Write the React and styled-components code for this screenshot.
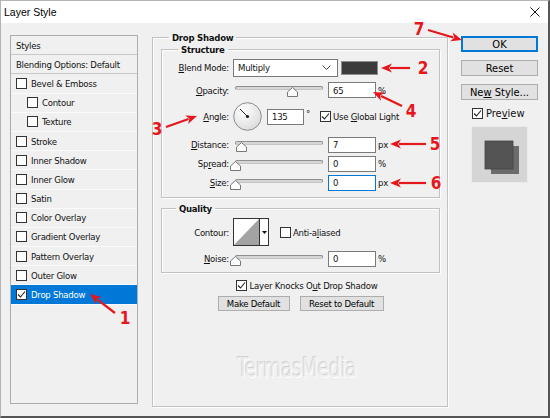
import React from "react";
import styled, { createGlobalStyle } from "styled-components";

const GlobalStyle = createGlobalStyle`
  html, body {
    margin: 0;
    padding: 0;
    background: #f0f0f0;
  }
  * {
    box-sizing: border-box;
  }
`;

const UI_FONT = `"DejaVu Sans Condensed", "DejaVu Sans", sans-serif`;
const RED = "#e5171d";

const Window = styled.div`
  position: relative;
  width: 550px;
  height: 418px;
  background: #f0f0f0;
  border: 1px solid #b4b4b4;
  border-right: 2px solid #555;
  border-bottom: 2px solid #555;
  font-family: ${UI_FONT};
  font-stretch: condensed;
  font-size: 9.5px;
  letter-spacing: -0.25px;
  color: #111;
  display: flex;
  flex-direction: column;
  overflow: hidden;
`;

const TitleBar = styled.div`
  height: 22px;
  flex: none;
  background: #fff;
  display: flex;
  align-items: center;
  justify-content: space-between;
  padding: 0 8px 0 3px;
`;

const Title = styled.span`
  font-family: "Liberation Sans", Arial, sans-serif;
  font-stretch: normal;
  font-size: 10.5px;
  letter-spacing: 0;
  color: #000;
`;

const Body = styled.div`
  display: flex;
  align-items: flex-start;
  padding: 8px 0 0 9px;
`;

/* ---------- left list of styles ---------- */

const StylePanel = styled.div`
  width: 128px;
  height: 369px;
  margin-top: 4px;
  border: 1px solid #adadad;
  background: #f0f0f0;
`;

const StyleRow = styled.div`
  height: 19.2px;
  display: flex;
  align-items: center;
  gap: 4px;
  padding-left: ${({ $indent }) => ($indent ? 16 : 5)}px;
  background: ${({ $selected }) => ($selected ? "#0078d7" : "transparent")};
  color: ${({ $selected }) => ($selected ? "#fff" : "#111")};
  border-bottom: 1px solid ${({ $header }) => ($header ? "#c8c8c8" : "#fbfbfb")};
  white-space: nowrap;
`;

const Box = styled.span`
  flex: none;
  width: 11px;
  height: 11px;
  border: 1px solid #333;
  background: #fff;
  display: inline-flex;
  align-items: center;
  justify-content: center;
`;

const Checkbox = ({ checked }) => (
  <Box>
    {checked && (
      <svg width="9" height="9" viewBox="0 0 9 9">
        <path d="M1 4.5 L3.5 7 L8 1.5" fill="none" stroke="#222" strokeWidth="1.1" />
      </svg>
    )}
  </Box>
);

/* ---------- group boxes ---------- */

const Group = styled.fieldset`
  margin: ${({ $m }) => $m || 0};
  padding: 0;
  min-width: 0;
  width: ${({ $w }) => $w}px;
  height: ${({ $h }) => $h}px;
  border: 1px solid #c2c2c2;
  box-shadow: inset 1px 1px 0 #fdfdfd, 1px 1px 0 #fdfdfd;
`;

const Legend = styled.legend`
  margin-left: ${({ $at }) => $at}px;
  padding: 0 3px;
  font-weight: bold;
  line-height: 13px;
  color: #111;
`;

const GroupBody = styled.div`
  display: flex;
  flex-direction: column;
  padding: ${({ $pad }) => $pad};
`;

const FieldRow = styled.div`
  display: flex;
  align-items: center;
  height: ${({ $h }) => $h}px;
  margin-top: ${({ $mt }) => $mt || 0}px;
`;

const Label = styled.span`
  width: 67px;
  margin-right: 4px;
  text-align: right;
  white-space: nowrap;
`;

const Select = styled.div`
  width: 105px;
  height: 18px;
  border: 1px solid #7a7a7a;
  background: #fff;
  display: flex;
  align-items: center;
  justify-content: space-between;
  padding: 0 6px 0 4px;
`;

const Swatch = styled.div`
  width: 37px;
  height: 14px;
  margin-left: 3px;
  background: #3b3b3b;
  border: 1px solid #8e8e8e;
`;

const SliderWrap = styled.div`
  position: relative;
  width: 95px;
  height: 16px;
  flex: none;
`;

const Track = styled.div`
  margin: 4px 0 0 2px;
  width: 88px;
  height: 4px;
  border-radius: 2px;
  background: #d6d6d6;
  border: 1px solid #8f8f8f;
  border-bottom-color: #c4c4c4;
`;

const Thumb = styled.svg`
  position: absolute;
  top: 5px;
`;

const Slider = ({ value }) => (
  <SliderWrap>
    <Track />
    <Thumb width="11" height="10" viewBox="0 0 11 10" style={{ left: 2 + value * 0.88 - 5 + "px" }}>
      <path d="M5.5 0.5 L10.5 5 L10.5 9.5 L0.5 9.5 L0.5 5 Z" fill="#fdfdfd" stroke="#777" />
    </Thumb>
  </SliderWrap>
);

const NumInput = styled.div`
  width: ${({ $w }) => $w || 48}px;
  height: ${({ $h }) => $h || 16}px;
  margin-left: ${({ $ml }) => $ml || 0}px;
  border: 1px solid ${({ $focus }) => ($focus ? "#0078d7" : "#7a7a7a")};
  background: #fff;
  display: flex;
  align-items: center;
  padding-left: 4px;
  flex: none;
`;

const Unit = styled.span`
  margin-left: 2px;
  align-self: ${({ $sup }) => ($sup ? "flex-start" : "center")};
  margin-top: ${({ $sup }) => ($sup ? "6px" : 0)};
`;

const Dial = styled.svg`
  flex: none;
`;

const Inline = styled.span`
  display: inline-flex;
  align-items: center;
  gap: 2px;
  margin-left: ${({ $ml }) => $ml || 0}px;
  white-space: nowrap;
`;

const ContourBox = styled.div`
  width: 36px;
  height: 28px;
  border: 1px solid #333;
  background: #fff;
  display: flex;
  flex: none;
`;

const ContourArrow = styled.div`
  width: 9px;
  border-left: 1px solid #333;
  display: flex;
  align-items: center;
  justify-content: center;
`;

const CenterRow = styled.div`
  display: flex;
  justify-content: center;
  align-items: center;
  gap: 3px;
  padding-left: 12px;
  margin-top: ${({ $mt }) => $mt}px;
  height: ${({ $h }) => $h}px;
`;

const ButtonRow = styled.div`
  display: flex;
  justify-content: center;
  gap: 10px;
  margin-top: 4px;
`;

const Button = styled.div`
  width: ${({ $w }) => $w}px;
  height: ${({ $h }) => $h || 15}px;
  border: 1px solid ${({ $primary }) => ($primary ? "#0078d7" : "#adadad")};
  box-shadow: ${({ $primary }) => ($primary ? "inset 0 0 0 1px #0078d7" : "none")};
  background: #e1e1e1;
  display: flex;
  align-items: center;
  justify-content: center;
  white-space: nowrap;
  font-size: ${({ $big }) => ($big ? "11px" : "9.5px")};
  letter-spacing: ${({ $big }) => ($big ? "0" : "-0.25px")};
  color: #000;
`;

/* ---------- right column ---------- */

const Side = styled.div`
  width: 77px;
  margin: 5px 0 0 13px;
  display: flex;
  flex-direction: column;
  gap: 8px;
`;

const PreviewCheck = styled.div`
  display: flex;
  align-items: center;
  gap: 3px;
  padding-left: 11px;
  margin-top: -1px;
  font-size: 11px;
  letter-spacing: 0;
`;

const PreviewBox = styled.div`
  width: 57px;
  height: 57px;
  margin: -2px 0 0 10px;
  background: #d5d5d5;
  border: 1px solid #ebebeb;
`;

/* ---------- overlays ---------- */

const Watermark = styled.div`
  position: absolute;
  left: 206px;
  top: 351px;
  width: 180px;
  text-align: center;
  font-family: "DejaVu Sans Condensed", "DejaVu Sans", sans-serif;
  font-stretch: condensed;
  font-size: 27px;
  letter-spacing: -0.5px;
  transform: scaleX(0.78);
  color: #ececec;
  text-shadow: -1px -1px 0 #d0d0d0, 1px 1px 0 #ffffff;
  pointer-events: none;
`;

const Marks = styled.svg`
  position: absolute;
  left: -1px;
  top: -1px;
  pointer-events: none;
`;

const Num = styled.text`
  font-family: "DejaVu Sans Condensed", "DejaVu Sans", sans-serif;
  font-stretch: condensed;
  font-weight: bold;
  font-size: 17px;
  fill: ${RED};
`;

const Arrow = ({ from, to }) => {
  const [x1, y1] = from;
  const [x2, y2] = to;
  const len = Math.hypot(x2 - x1, y2 - y1);
  const ux = (x2 - x1) / len;
  const uy = (y2 - y1) / len;
  const hl = 11;
  const hw = 4.5;
  const bx = x2 - ux * hl;
  const by = y2 - uy * hl;
  const pts = [
    [x2, y2],
    [bx - uy * hw, by + ux * hw],
    [bx + ux * 3, by + uy * 3],
    [bx + uy * hw, by - ux * hw],
  ]
    .map((p) => p.join(","))
    .join(" ");
  return (
    <g>
      <line x1={x1} y1={y1} x2={bx + ux * 2} y2={by + uy * 2} stroke={RED} strokeWidth="2.2" />
      <polygon points={pts} fill={RED} />
    </g>
  );
};

const styleItems = [
  { name: "Bevel & Emboss" },
  { name: "Contour", indent: true },
  { name: "Texture", indent: true },
  { name: "Stroke" },
  { name: "Inner Shadow" },
  { name: "Inner Glow" },
  { name: "Satin" },
  { name: "Color Overlay" },
  { name: "Gradient Overlay" },
  { name: "Pattern Overlay" },
  { name: "Outer Glow" },
  { name: "Drop Shadow", checked: true, selected: true },
];

const annotations = [
  { n: "1", at: [125, 324], from: [115, 313], to: [90, 294] },
  { n: "2", at: [423, 74], from: [410, 68], to: [381, 68] },
  { n: "3", at: [157, 135], from: [166, 127], to: [197, 116] },
  { n: "4", at: [411, 117], from: [402, 106], to: [373, 92] },
  { n: "5", at: [435, 150], from: [426, 144], to: [390, 144] },
  { n: "6", at: [436, 189], from: [426, 183], to: [390, 183] },
  { n: "7", at: [419, 35], from: [428, 30], to: [462, 40] },
];

const SliderField = ({ label, value, text, unit, focus, mt }) => (
  <FieldRow $h={19} $mt={mt}>
    <Label>{label}</Label>
    <Slider value={value} />
    <NumInput $focus={focus}>{text}</NumInput>
    <Unit>{unit}</Unit>
  </FieldRow>
);

export default function App() {
  return (
    <>
      <GlobalStyle />
      <Window>
        <TitleBar>
          <Title>Layer Style</Title>
          <svg width="10" height="10" viewBox="0 0 10 10">
            <path d="M0.5 0.5 L9.5 9.5 M9.5 0.5 L0.5 9.5" stroke="#111" strokeWidth="1" />
          </svg>
        </TitleBar>

        <Body>
          <StylePanel>
            <StyleRow $header>Styles</StyleRow>
            <StyleRow $header>Blending Options: Default</StyleRow>
            {styleItems.map((s) => (
              <StyleRow key={s.name} $indent={s.indent} $selected={s.selected}>
                <Checkbox checked={s.checked} />
                {s.name}
              </StyleRow>
            ))}
          </StylePanel>

          <Group $w={296} $h={376} $m="0 0 0 14px">
            <Legend $at={16}>Drop Shadow</Legend>
            <GroupBody $pad="0 7px 0 8px">
              <Group $w={279} $h={155} $m="-1px 0 0 0">
                <Legend $at={16}>Structure</Legend>
                <GroupBody $pad="2px 0 0 0">
                  <FieldRow $h={19}>
                    <Label>
                      <u>B</u>lend Mode:
                    </Label>
                    <Select>
                      Multiply
                      <svg width="9" height="6" viewBox="0 0 9 6">
                        <path d="M0.5 0.5 L4.5 4.5 L8.5 0.5" fill="none" stroke="#444" />
                      </svg>
                    </Select>
                    <Swatch />
                  </FieldRow>
                  <FieldRow $h={20} $mt={3}>
                    <Label>
                      <u>O</u>pacity:
                    </Label>
                    <Slider value={65} />
                    <NumInput>65</NumInput>
                    <Unit>%</Unit>
                  </FieldRow>
                  <FieldRow $h={29} $mt={2}>
                    <Label>
                      <u>A</u>ngle:
                    </Label>
                    <Dial width="29" height="29" viewBox="0 0 29 29">
                      <defs>
                        <radialGradient id="dialFill" cx="0.35" cy="0.3" r="0.8">
                          <stop offset="0" stopColor="#ffffff" />
                          <stop offset="1" stopColor="#d9d9d9" />
                        </radialGradient>
                      </defs>
                      <circle cx="14.5" cy="14.5" r="13.8" fill="url(#dialFill)" stroke="#8c8c8c" />
                      <line x1="7" y1="7" x2="14.5" y2="14.5" stroke="#222" strokeWidth="1" />
                      <circle cx="14.5" cy="14.5" r="1.6" fill="#222" />
                    </Dial>
                    <NumInput $w={37} $ml={5}>
                      135
                    </NumInput>
                    <Unit $sup>°</Unit>
                    <Inline $ml={10}>
                      <Checkbox checked />
                      <span>
                        Use <u>G</u>lobal Light
                      </span>
                    </Inline>
                  </FieldRow>
                  <SliderField
                    mt={4}
                    label={
                      <>
                        <u>D</u>istance:
                      </>
                    }
                    value={7}
                    text="7"
                    unit="px"
                  />
                  <SliderField
                    label={
                      <>
                        Sp<u>r</u>ead:
                      </>
                    }
                    value={0}
                    text="0"
                    unit="%"
                  />
                  <SliderField
                    label={
                      <>
                        <u>S</u>ize:
                      </>
                    }
                    value={0}
                    text="0"
                    unit="px"
                    focus
                  />
                </GroupBody>
              </Group>

              <Group $w={279} $h={71} $m="4px 0 0 0">
                <Legend $at={14}>Quality</Legend>
                <GroupBody $pad="3px 0 0 0">
                  <FieldRow $h={28}>
                    <Label>Contour:</Label>
                    <ContourBox>
                      <svg width="25" height="26" viewBox="0 0 25 26">
                        <polygon points="0,26 25,0 25,26" fill="#a3a3a3" />
                      </svg>
                      <ContourArrow>
                        <svg width="5" height="3" viewBox="0 0 5 3">
                          <polygon points="0,0 5,0 2.5,3" fill="#111" />
                        </svg>
                      </ContourArrow>
                    </ContourBox>
                    <Inline $ml={11}>
                      <Checkbox />
                      <span>
                        Anti-a<u>l</u>iased
                      </span>
                    </Inline>
                  </FieldRow>
                  <SliderField
                    mt={3}
                    label={
                      <>
                        <u>N</u>oise:
                      </>
                    }
                    value={0}
                    text="0"
                    unit="%"
                  />
                </GroupBody>
              </Group>

              <CenterRow $mt={5} $h={14}>
                <Checkbox checked />
                <span>
                  Layer Knocks O<u>u</u>t Drop Shadow
                </span>
              </CenterRow>
              <ButtonRow>
                <Button $w={72}>Make Default</Button>
                <Button $w={84}>Reset to Default</Button>
              </ButtonRow>
            </GroupBody>
          </Group>

          <Side>
            <Button $w={77} $h={16} $primary $big>
              OK
            </Button>
            <Button $w={77} $h={16} $big>
              Reset
            </Button>
            <Button $w={77} $h={16} $big>
              <span>
                Ne<u>w</u> Style...
              </span>
            </Button>
            <PreviewCheck>
              <Checkbox checked />
              <span>
                Pre<u>v</u>iew
              </span>
            </PreviewCheck>
            <PreviewBox>
              <svg width="55" height="55" viewBox="0 0 55 55">
                <rect x="19" y="19" width="28" height="28" fill="#6c6c6c" />
                <rect x="13" y="14" width="28" height="28" fill="#545454" stroke="#444" strokeWidth="0.8" />
              </svg>
            </PreviewBox>
          </Side>
        </Body>

        <Watermark>TermasMedia</Watermark>

        <Marks width="550" height="418" viewBox="0 0 550 418">
          {annotations.map((a) => (
            <g key={a.n}>
              <Arrow from={a.from} to={a.to} />
              <Num x={a.at[0]} y={a.at[1]} textAnchor="middle">
                {a.n}
              </Num>
            </g>
          ))}
        </Marks>
      </Window>
    </>
  );
}
